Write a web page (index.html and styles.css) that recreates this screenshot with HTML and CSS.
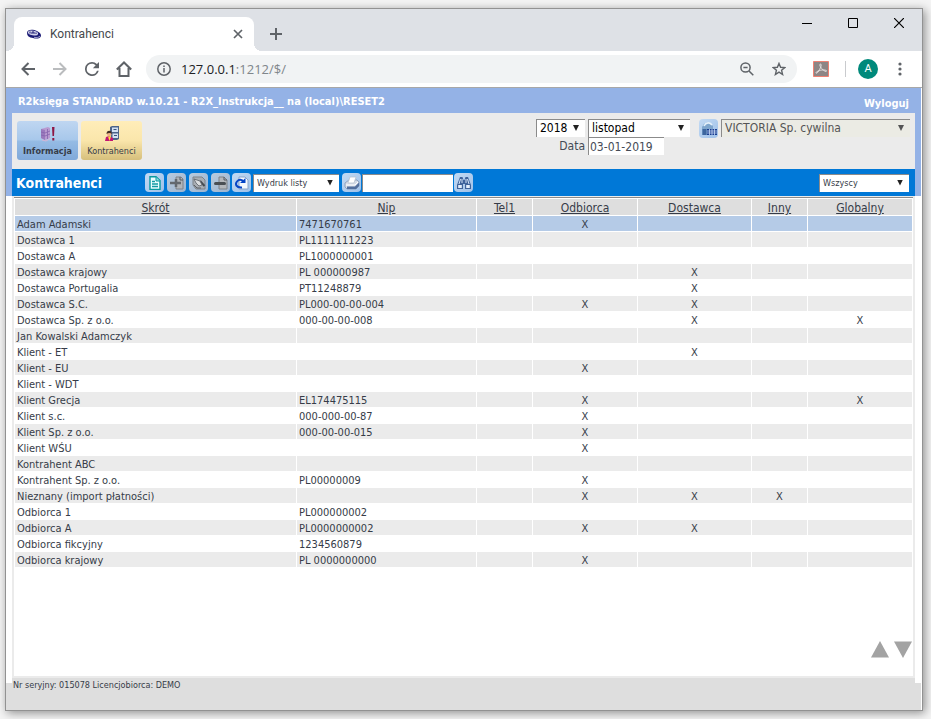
FILE: index.html
```html
<!DOCTYPE html>
<html lang="pl">
<head>
<meta charset="utf-8">
<title>Kontrahenci</title>
<link rel="stylesheet" href="styles.css">
</head>
<body>
<div class="window">
  <header class="tabstrip">
    <div class="tab">
      <svg class="favicon" viewBox="0 0 16 12"><path d="M1 5c0-4 6-4 10-2 3 1.500 4 3 4 5-1 3-5 3-8 2C3 9.500 1 8 1 5z" fill="#1b1b75"/><ellipse cx="7" cy="5" rx="5.200" ry="2.300" transform="rotate(12 7 5)" fill="#d3d3ea"/><path d="M4 5.500v-2M6 6V4h2v2M10 6V4.500" fill="none" stroke="#1b1b75"/><path d="M8 9.300c3 .7 5 0 6-1.300" fill="none" stroke="#c3c3df" stroke-width=".8"/></svg>
      <span class="tab-title">Kontrahenci</span>
      <button class="icon-btn tab-close" aria-label="Zamknij kartę"><svg width="10" height="10" viewBox="0 0 10 10"><path d="M1 1l8 8M9 1L1 9" stroke="#5f6368" stroke-width="1.7"/></svg></button>
    </div>
    <button class="icon-btn new-tab" aria-label="Nowa karta"><svg width="12" height="12" viewBox="0 0 12 12"><path d="M6 0v12M0 6h12" stroke="#5f6368" stroke-width="2"/></svg></button>
    <div class="window-controls">
      <button class="icon-btn" aria-label="Minimalizuj"><svg width="10" height="10" viewBox="0 0 10 10"><path d="M0 5.5h10" stroke="#000"/></svg></button>
      <button class="icon-btn" aria-label="Maksymalizuj"><svg width="10" height="10" viewBox="0 0 10 10"><path d="M.5.5h9v9h-9z" fill="none" stroke="#000"/></svg></button>
      <button class="icon-btn" aria-label="Zamknij"><svg width="10" height="10" viewBox="0 0 10 10"><path d="M0 0l10 10M10 0L0 10" stroke="#000" stroke-width="1.2"/></svg></button>
    </div>
  </header>

  <nav class="browser-bar">
    <button class="icon-btn" aria-label="Wstecz"><svg width="14" height="14" viewBox="0 0 14 14" fill="none" stroke="#5f6368" stroke-width="2"><path d="M14 7H1.5M7.5 1l-6 6 6 6"/></svg></button>
    <button class="icon-btn" aria-label="Dalej"><svg width="14" height="14" viewBox="0 0 14 14" fill="none" stroke="#babcbe" stroke-width="2"><path d="M0 7h12.500M6.500 1l6 6-6 6"/></svg></button>
    <button class="icon-btn" aria-label="Odśwież"><svg width="14" height="14" viewBox="4 4 16 16" fill="#5f6368"><path d="M17.650 6.350A7.960 7.960 0 0 0 12 4a8 8 0 1 0 7.730 10h-2.080A6 6 0 1 1 12 6c1.660 0 3.140.69 4.220 1.780L13 11h7V4z"/></svg></button>
    <button class="icon-btn" aria-label="Strona startowa"><svg width="16" height="16" viewBox="0 0 16 16" fill="none" stroke="#5f6368" stroke-width="2"><path d="M.8 8.500L8 1.500l7.200 7M3.500 7v8h9V7"/></svg></button>
    <div class="address">
      <svg width="14" height="14" viewBox="0 0 14 14" fill="none" stroke="#5f6368" stroke-width="1.500"><circle cx="7" cy="7" r="6.200"/><path d="M7 6v4.500M7 3.500V5"/></svg>
      <span class="url">127.0.0.1<span class="path">:1212/$/</span></span>
      <button class="icon-btn zoom-btn" aria-label="Powiększenie"><svg width="14" height="14" viewBox="0 0 14 14" fill="none" stroke="#5f6368" stroke-width="1.500"><circle cx="5.500" cy="5.500" r="4.600"/><path d="M9 9l4.300 4.300M3.400 5.500h4.200"/></svg></button>
      <button class="icon-btn" aria-label="Dodaj do zakładek"><svg width="14" height="14" viewBox="0 0 14 14" fill="none" stroke="#5f6368" stroke-width="1.400"><path d="M7 1.400l1.600 3.900 4.200.3-3.200 2.700 1 4.200L7 10.200l-3.600 2.300 1-4.200-3.200-2.700 4.200-.3z"/></svg></button>
    </div>
    <button class="icon-btn pdf" aria-label="PDF"><svg width="16" height="16" viewBox="0 0 16 16"><path d="M.5.5h15v15H.5z" fill="#8d8585" stroke="#ee8072"/><path d="M7.500 3c1.500 0 .5 4-2.500 8-1 1.500-2.500 1.500-2 .5s5-3 8.500-2.500 2 2 .5 1.200C9.500 9 7 6 6.800 4c0-.6.2-1 .7-1z" fill="none" stroke="#e4dede"/></svg></button>
    <span class="separator"></span>
    <button class="avatar">A</button>
    <button class="icon-btn menu" aria-label="Menu"><svg width="4" height="14" viewBox="0 0 4 14" fill="#5f6368"><circle cx="2" cy="2" r="1.600"/><circle cx="2" cy="7" r="1.600"/><circle cx="2" cy="12" r="1.600"/></svg></button>
  </nav>

  <main class="app">
    <div class="app-frame">
      <div class="app-title">
        <span>R2księga STANDARD w.10.21 - R2X_Instrukcja__ na (local)\RESET2</span>
        <a href="#" class="logout">Wyloguj</a>
      </div>
      <div class="panel">
        <div class="modules">
          <button class="module module-info">
            <svg width="16" height="16" viewBox="0 0 16 16"><path d="M1 3l7-2 2 1v10l-5 2-4-2z" fill="#b99ad0"/><path d="M1 3l4 1v10l-4-2z" fill="#9a79bd"/><path d="M1 6l4 1 5-2M1 9l4 1 5-2M7.500 3v10" stroke="#8563ad" stroke-width=".8" fill="none"/><path d="M11 12l-5 3-4-1" fill="none" stroke="#d5b4d5"/><path d="M12 1h2.500L14 10h-1.500zM12.300 12h2v2.500h-2z" fill="#8e1745"/></svg>
            <span>Informacja</span>
          </button>
          <button class="module module-contacts">
            <svg width="16" height="16" viewBox="0 0 16 16"><path d="M6 1l2-1h7v13l-2 1H7V6H6z" fill="#4c6489"/><path d="M8 1.500h6V6H8zM8.500 7.500H14V12H8.500z" fill="#d3e1f2"/><path d="M9.500 3.500h3M10 9.500h3" stroke="#3b547b" stroke-width="1.200"/><path d="M1 15l1-4 3-1 4 2v3z" fill="#c31473"/><path d="M4 10.500l1.500 4.500L7 10.500z" fill="#ffe23c"/><circle cx="5.200" cy="8" r="2.300" fill="#edb084"/><path d="M2.500 8c-.3-4.500 5.700-4.500 5.400 0-1.500-1.500-3.500-1.500-5.400 0z" fill="#402d25"/></svg>
            <span>Kontrahenci</span>
          </button>
        </div>
        <div class="context">
          <div class="period">
            <div class="select year"><select aria-label="Rok"><option>2018</option></select></div>
            <div class="select month"><select aria-label="Miesiąc"><option>listopad</option></select></div>
            <label for="date">Data</label>
            <input id="date" class="field date" value="03-01-2019">
          </div>
          <button class="tool company-btn" aria-label="Firma"><svg width="16" height="16" viewBox="0 0 16 16"><path d="M1 14V6l2-3 4-2 5 4v3H6v6z" fill="#7fa6cd"/><path d="M3 5c2-4 6-4 8-1" fill="none" stroke="#e6f1fa" stroke-width="1.600"/><path d="M1.500 8h4v6h-4z" fill="#3d669f"/><path d="M6 8h10v6H6z" fill="#193e91"/><path d="M6 10h10M6 12h10M8.500 8v6M11 8v6M13.500 8v6" stroke="#d9e8ff" stroke-width=".7"/></svg></button>
          <div class="select company"><select aria-label="Wybór firmy"><option>VICTORIA Sp. cywilna</option></select></div>
        </div>
      </div>
      <div class="actions">
        <h1>Kontrahenci</h1>
        <div class="tools">
          <button class="tool" aria-label="Pokaż"><svg width="14" height="14" viewBox="0 0 14 14"><path d="M2 .8h6L12 4.500v9H2z" fill="#e9fdff" stroke="#08999f" stroke-width="1.400"/><path d="M8 1v4h4" fill="#8bdbe0" stroke="#08999f"/><path d="M4 5.500h3M4 8h6M4 10.500h6" stroke="#119aa4" stroke-width="1.300"/></svg></button>
          <button class="tool tool-off" aria-label="Dodaj"><svg width="14" height="14" viewBox="0 0 14 14"><path d="M6 1h5l2 2v10H6z" fill="#b0b4b9" stroke="#7d8289"/><path d="M6 3v8M0 7h11" stroke="#63686e" stroke-width="2.500"/><path d="M10 1v3h3" fill="none" stroke="#555b63"/></svg></button>
          <button class="tool tool-off" aria-label="Edytuj"><svg width="14" height="14" viewBox="0 0 14 14"><path d="M1 1h9l3 3v9H4L1 9z" fill="#a9aeb4" stroke="#7d8289"/><path d="M8 5l4.500 5" stroke="#464b50" stroke-width="2"/><path d="M2 3l6 2 2 4-3 1-3-3z" fill="#dadcde" stroke="#5b6066" stroke-width=".8"/><path d="M2 9l3 3h4" stroke="#5b6066" fill="none"/></svg></button>
          <button class="tool tool-off" aria-label="Usuń"><svg width="14" height="14" viewBox="0 0 14 14"><path d="M5 1h5l3 3v9H5z" fill="#b4b7bb" stroke="#7d8289"/><path d="M1.500 7.500h9" stroke="#4a4f54" stroke-width="3" stroke-linecap="round"/><path d="M10 1v3h3" fill="none" stroke="#555b63"/></svg></button>
          <button class="tool" aria-label="Odśwież listę"><svg width="14" height="14" viewBox="0 0 14 14"><path d="M4 1h6l3 3v9H4z" fill="#f4f8fe" stroke="#89a4c9"/><path d="M7 11.500C1 12 0 8 2 5.500S7 3 8.500 6" fill="none" stroke="#0645c6" stroke-width="2"/><path d="M5 7h5.500V2z" fill="#0645c6"/></svg></button>
          <div class="select small print-list"><select aria-label="Wydruk"><option>Wydruk listy</option></select></div>
          <button class="tool" aria-label="Drukuj"><svg width="16" height="14" viewBox="0 0 16 14"><path d="M1 7l4-3h8l2 2v4l-3 3H3l-2-2z" fill="#d5dce7" stroke="#8295b3" stroke-width=".8"/><path d="M6 1h6l-2 6H4z" fill="#fff" stroke="#b9c4d2" stroke-width=".8"/><path d="M3 10.500h8l4-4V10l-3 3H3z" fill="#526f9e"/><path d="M2 9h9l3-3" fill="none" stroke="#fff"/></svg></button>
          <input class="field search" aria-label="Szukaj">
          <button class="tool" aria-label="Znajdź"><svg width="14" height="12" viewBox="0 0 14 12"><path d="M3 0h2.500l1 3h1l1-3H11l3 8v4H8V7H6v5H0V8z" fill="#3f639b"/><path d="M3.500 2L2 7M5 2v4M9 2v4M10.500 2L12 7" stroke="#d9e7fa"/><path d="M1.200 8h3.600v3H1.200zM9.200 8h3.600v3H9.200z" fill="#e4eefb"/></svg></button>
        </div>
        <div class="select small filter"><select aria-label="Filtr"><option>Wszyscy</option></select></div>
      </div>
    </div>

    <div class="content">
      <div class="list">
        <table>
          <colgroup><col class="c-name"><col class="c-nip"><col class="c-tel"><col class="c-recipient"><col class="c-supplier"><col class="c-other"><col class="c-global"></colgroup>
          <thead><tr><th><a href="#">Skrót</a></th><th><a href="#">Nip</a></th><th><a href="#">Tel1</a></th><th><a href="#">Odbiorca</a></th><th><a href="#">Dostawca</a></th><th><a href="#">Inny</a></th><th><a href="#">Globalny</a></th></tr></thead>
          <tbody>
            <tr class="selected"><td>Adam Adamski</td><td>7471670761</td><td></td><td>X</td><td></td><td></td><td></td></tr>
            <tr><td>Dostawca 1</td><td>PL1111111223</td><td></td><td></td><td></td><td></td><td></td></tr>
            <tr><td>Dostawca A</td><td>PL1000000001</td><td></td><td></td><td></td><td></td><td></td></tr>
            <tr><td>Dostawca krajowy</td><td>PL 000000987</td><td></td><td></td><td>X</td><td></td><td></td></tr>
            <tr><td>Dostawca Portugalia</td><td>PT11248879</td><td></td><td></td><td>X</td><td></td><td></td></tr>
            <tr><td>Dostawca S.C.</td><td>PL000-00-00-004</td><td></td><td>X</td><td>X</td><td></td><td></td></tr>
            <tr><td>Dostawca Sp. z o.o.</td><td>000-00-00-008</td><td></td><td></td><td>X</td><td></td><td>X</td></tr>
            <tr><td>Jan Kowalski Adamczyk</td><td></td><td></td><td></td><td></td><td></td><td></td></tr>
            <tr><td>Klient - ET</td><td></td><td></td><td></td><td>X</td><td></td><td></td></tr>
            <tr><td>Klient - EU</td><td></td><td></td><td>X</td><td></td><td></td><td></td></tr>
            <tr><td>Klient - WDT</td><td></td><td></td><td></td><td></td><td></td><td></td></tr>
            <tr><td>Klient Grecja</td><td>EL174475115</td><td></td><td>X</td><td></td><td></td><td>X</td></tr>
            <tr><td>Klient s.c.</td><td>000-000-00-87</td><td></td><td>X</td><td></td><td></td><td></td></tr>
            <tr><td>Klient Sp. z o.o.</td><td>000-00-00-015</td><td></td><td>X</td><td></td><td></td><td></td></tr>
            <tr><td>Klient WŚU</td><td></td><td></td><td>X</td><td></td><td></td><td></td></tr>
            <tr><td>Kontrahent ABC</td><td></td><td></td><td></td><td></td><td></td><td></td></tr>
            <tr><td>Kontrahent Sp. z o.o.</td><td>PL00000009</td><td></td><td>X</td><td></td><td></td><td></td></tr>
            <tr><td>Nieznany (import płatności)</td><td></td><td></td><td>X</td><td>X</td><td>X</td><td></td></tr>
            <tr><td>Odbiorca 1</td><td>PL000000002</td><td></td><td></td><td></td><td></td><td></td></tr>
            <tr><td>Odbiorca A</td><td>PL0000000002</td><td></td><td>X</td><td>X</td><td></td><td></td></tr>
            <tr><td>Odbiorca fikcyjny</td><td>1234560879</td><td></td><td></td><td></td><td></td><td></td></tr>
            <tr><td>Odbiorca krajowy</td><td>PL 0000000000</td><td></td><td>X</td><td></td><td></td><td></td></tr>
          </tbody>
        </table>
        <div class="pager">
          <button class="icon-btn" aria-label="W górę"><svg width="18" height="17" viewBox="0 0 18 17"><path d="M9 0l9 16.500H0z" fill="#a3a3a3"/></svg></button>
          <button class="icon-btn" aria-label="W dół"><svg width="18" height="17" viewBox="0 0 18 17"><path d="M0 .5h18L9 17z" fill="#a3a3a3"/></svg></button>
        </div>
      </div>
    </div>
    <footer class="status"><div>Nr seryjny: 015078 Licencjobiorca: DEMO</div></footer>
  </main>
</div>
</body>
</html>
```
FILE: styles.css
```css
* { box-sizing: border-box; }

body {
  margin: 0;
  padding: 8px 8px 8px 5px;
  min-height: 100vh;
  display: flex;
  background: #f4f4f4;
  color: #363c48;
  font: 11px/15px Tahoma, "DejaVu Sans Condensed", "DejaVu Sans", sans-serif;
}

button, input, select { font: inherit; color: inherit; margin: 0; }
button { border: 0; padding: 0; }
a { color: inherit; }
svg { display: block; flex: none; }

.window {
  flex: 1;
  display: flex;
  flex-direction: column;
  border: 1px solid #929292;
  background: #fff;
  box-shadow: 2px 2px 9px #0000006b;
}

.icon-btn {
  display: flex;
  align-items: center;
  justify-content: center;
  background: none;
}

/* browser chrome */
.tabstrip {
  display: flex;
  height: 42px;
  padding: 8px 0 0 8px;
  background: #dee1e6;
}
.tab {
  position: relative;
  width: 240px;
  display: flex;
  align-items: center;
  padding: 0 11px 0 12px;
  background: #fff;
  border-radius: 8px 8px 0 0;
}
.tab::before, .tab::after {
  content: "";
  position: absolute;
  bottom: 0;
  width: 8px;
  height: 8px;
}
.tab::before { right: 100%; background: radial-gradient(circle at 0 0, transparent 8px, #fff 8px); }
.tab::after { left: 100%; background: radial-gradient(circle at 100% 0, transparent 8px, #fff 8px); }
.favicon { width: 16px; height: 12px; }
.tab-title {
  flex: 1;
  margin-left: 8px;
  color: #45494d;
  font: 12px/16px Roboto, "Noto Sans", sans-serif;
}
.new-tab { width: 44px; height: 34px; }
.window-controls { display: flex; margin-left: auto; height: 12px; }
.window-controls .icon-btn { width: 46px; }

.browser-bar {
  display: flex;
  align-items: center;
  height: 37px;
  padding: 0 14px 0 6px;
  border-bottom: 1px solid #a8a8a8;
}
.browser-bar > .icon-btn { width: 32px; height: 32px; }
.address {
  flex: 1;
  display: flex;
  align-items: center;
  height: 28px;
  margin-left: 6px;
  padding: 0 11px;
  border-radius: 14px;
  background: #f1f3f4;
}
.url {
  flex: 1;
  margin-left: 10px;
  color: #202124;
  font: 13px/20px "Open Sans", "Noto Sans", sans-serif;
}
.path { color: #80868b; }
.zoom-btn { margin-right: 18px; }
.browser-bar > .pdf { width: 16px; margin: 0 16px; }
.separator { width: 1px; height: 16px; background: #c9cbce; }
.avatar {
  width: 20px;
  height: 20px;
  margin: 0 12px;
  border-radius: 50%;
  background: #00897b;
  color: #fff;
  font: 11px/20px Roboto, sans-serif;
}
.browser-bar > .menu { width: 16px; margin-left: 2px; }

/* application */
.app { flex: 1; display: flex; flex-direction: column; }
.app-frame {
  margin-right: 1px;
  border: solid #94b2e6;
  border-width: 0 6px;
}
.app-title {
  display: flex;
  justify-content: space-between;
  height: 25px;
  padding: 6px 6px 0;
  background: #94b2e6;
  color: #fff;
  font-weight: bold;
}
.logout { padding-top: 2px; text-decoration: none; }

.panel {
  display: flex;
  justify-content: space-between;
  height: 56px;
  background: #ebebeb;
}
.modules { display: flex; gap: 3px; padding: 8px 5px; }
.module {
  width: 61px;
  height: 39px;
  display: flex;
  flex-direction: column;
  align-items: center;
  gap: 3px;
  padding-top: 5px;
  border-radius: 3px;
  font-size: 9px;
  line-height: 12px;
}
.module-info { background: linear-gradient(#bfd6f1, #a8c8eb 48%, #95bbe4 52%, #80a9da); font-weight: bold; }
.module-contacts { background: linear-gradient(#ffedb9, #fae6ab 50%, #d6bf7c); }

.context { display: flex; align-items: flex-start; padding: 6px 5px; font-size: 12px; }
.period {
  display: grid;
  grid-template-columns: 49px 102px;
  column-gap: 3px;
  color: #000;
}
.period label { text-align: right; line-height: 18px; color: #454b56; }

.select { position: relative; height: 18px; }
.select select {
  display: block;
  width: 100%;
  height: 100%;
  padding: 0 16px 0 3px;
  appearance: none;
  border: solid #8b8b8b;
  border-width: 1px 0 0 1px;
  border-radius: 0;
  background: #fff;
}
.select::after {
  content: "";
  position: absolute;
  top: 6px;
  right: 6px;
  width: 6px;
  height: 6px;
  background: #222;
  clip-path: polygon(0 0, 100% 0, 50% 100%);
  pointer-events: none;
}
.company { width: 189px; }
.company select { background: #ebebe4; color: #545454; }
.company::after { background: #545454; }
.small { font-size: 9px; }

.field {
  height: 18px;
  padding: 0 1px;
  border: solid #8b8b8b;
  border-width: 1px 0 0 1px;
  border-radius: 0;
  background: #fff;
  color: #454b56;
}
.date { width: 76px; }

.tool {
  width: 19px;
  height: 19px;
  display: flex;
  align-items: center;
  justify-content: center;
  border-radius: 4px;
  background: linear-gradient(135deg, #c3daf3, #9fc1e9);
}
.tool-off { background: linear-gradient(135deg, #b9cbde, #9db4cf); }
.company-btn { margin: 0 3px 0 9px; }

.actions {
  display: flex;
  align-items: center;
  height: 27px;
  padding: 0 6px 0 4px;
  background: #0078d7;
}
.actions h1 {
  flex: none;
  width: 129px;
  margin: 0;
  color: #fff;
  font-size: 14px;
  line-height: 20px;
}
.tools { display: flex; align-items: center; gap: 3px; }
.tools .tool { margin-right: -1px; }
.tools .tool:nth-child(-n+3) { margin-right: 0; }
.print-list { width: 86px; }
.search { width: 91px; margin-left: -1px; margin-right: -2px; }
.filter { width: 90px; margin-left: auto; }

/* contractor list */
.content {
  flex: 1;
  display: flex;
  margin: 0 7px 0 6px;
  padding: 1px 2px 2px;
  background: #ebebeb;
}
.list {
  flex: 1;
  display: flex;
  flex-direction: column;
  border-top: 1px solid #8b8b8b;
  background: #fff;
}
table { width: 100%; table-layout: fixed; border-spacing: 1px; }
.c-name { width: 281px; }
.c-nip { width: 179px; }
.c-tel, .c-other { width: 55px; }
.c-recipient, .c-global { width: 104px; }
.c-supplier { width: 113px; }
th { padding: 2px 0 0; background: #dedede; font-size: 12px; font-weight: normal; line-height: 14px; }
td { height: 15px; padding: 2px 2px 0; line-height: 13px; text-align: center; white-space: nowrap; }
td:nth-child(-n+2) { text-align: left; }
tbody tr:nth-child(even) { background: #ebebeb; }
tbody tr:nth-child(even) td { border: 0; }
tbody tr:nth-child(even) { background: none; }
tbody tr:nth-child(even) td { background: #ebebeb; }
tbody tr.selected td { background: #b5cbe7; }
.pager { display: flex; justify-content: flex-end; gap: 5px; margin-top: auto; padding: 0 1px 18px; }

.status {
  height: 32px;
  margin-right: 1px;
  padding: 0 6px;
  background: linear-gradient(#fff, #fff) 0 0 / 6px 5px no-repeat,
              linear-gradient(#fff, #fff) 100% 0 / 6px 5px no-repeat,
              #dedede;
  font-size: 9px;
  line-height: 14px;
}
.status div { padding-left: 1px; }
```
